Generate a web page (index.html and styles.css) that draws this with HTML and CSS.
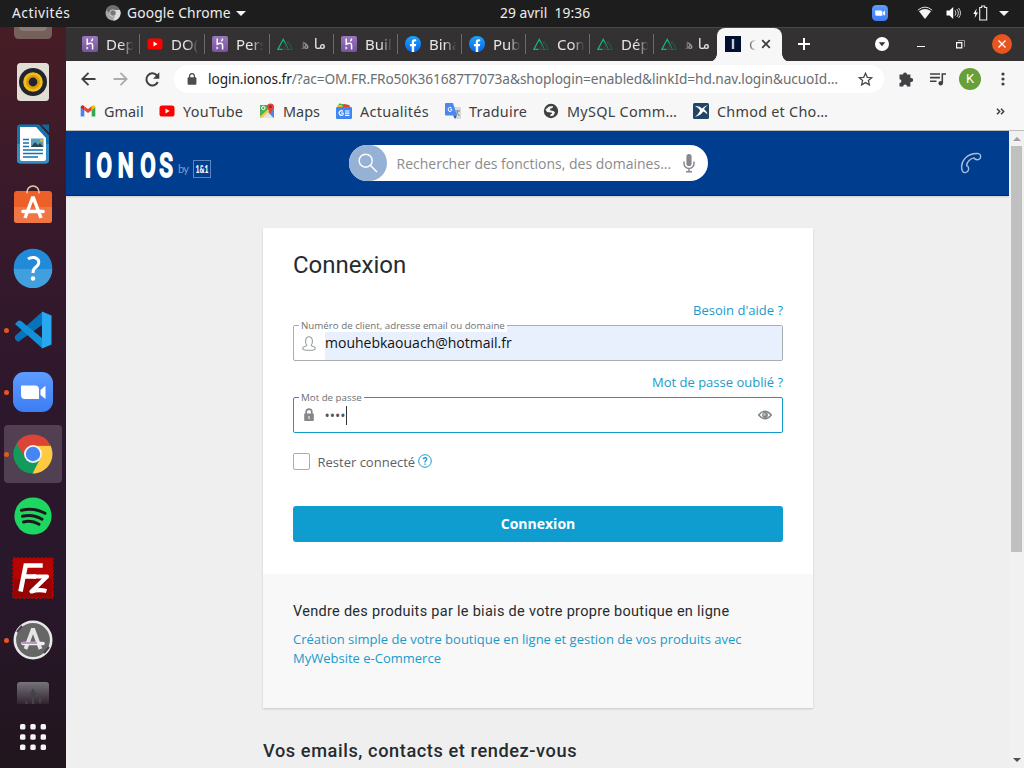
FILE: index.html
```html
<!DOCTYPE html>
<html lang="fr">
<head>
<meta charset="utf-8">
<title>Connexion</title>
<link rel="stylesheet" href="styles.css">
</head>
<body>
<svg class="defs" width="0" height="0">
  <defs>
    <linearGradient id="violet" x2="0" y2="1"><stop stop-color="#9a78bd"/><stop offset="1" stop-color="#76539c"/></linearGradient>
    <linearGradient id="fbg" x2="0" y2="1"><stop stop-color="#19a7fa"/><stop offset="1" stop-color="#0866ed"/></linearGradient>
    <linearGradient id="zoomg" x2="0" y2="1"><stop stop-color="#5d9cff"/><stop offset="1" stop-color="#3d7df5"/></linearGradient>
    <linearGradient id="fade" x2="0" y2="1"><stop stop-color="#77747a"/><stop offset="1" stop-color="#77747a" stop-opacity=".15"/></linearGradient>
    <symbol id="heroku" viewBox="0 0 16 16"><rect width="16" height="16" rx="2" fill="url(#violet)"/><path d="M5.200 2.500v5.700c2.600-1.200 5.400-1.500 5.400 1v4.300M10.600 2.500c0 1.300-.5 2-1.300 2.700" fill="none" stroke="#fff" stroke-width="1.500"/><path d="M4.500 10.200v3.600l2-1.800z" fill="#fff"/></symbol>
    <symbol id="yt" viewBox="0 0 16 16"><rect x=".5" y="2.500" width="15" height="11" rx="2.600" fill="#f00"/><path d="M6.500 5.600v4.800L10.600 8z" fill="#fff"/></symbol>
    <symbol id="nuxt" viewBox="0 0 16 16"><path d="M5.500 13.400H.9L6.200 3.200 8.500 7.500" fill="none" stroke="#10b981" stroke-width="1.200"/><path d="M7.200 13.400H15.400L11.100 5.500 6.800 13.400" fill="none" stroke="#2c5560" stroke-width="1"/><path d="m8.200 6.900 3.300 6.500" stroke="#24806f" stroke-width="1"/></symbol>
    <symbol id="fb" viewBox="0 0 16 16"><circle cx="8" cy="8" r="8" fill="url(#fbg)"/><path d="M6.800 16v-5.800H4.900V7.900h1.900V6.300c0-2 1-3 2.800-3l1.600.1v1.900h-.9c-1 0-1.200.5-1.200 1.200v1.400h2.100l-.4 2.300H9.200V16z" fill="#fff"/></symbol>
    <symbol id="cam" viewBox="0 0 40 40"><rect width="40" height="40" rx="11" fill="url(#zoomg)"/><path d="M8 13.500h14a4 4 0 0 1 4 4V27H12a4 4 0 0 1-4-4zM27.500 18l5-4.200V27l-5-4z" fill="#fff"/></symbol>
  </defs>
</svg>

<header class="topbar">
  <span class="activities">Activités</span>
  <span class="app">
    <svg width="16" height="16" viewBox="0 0 16 16"><circle cx="8" cy="8" r="7.500" fill="#a6a6a6"/><path d="M1 4.500A7.500 7.500 0 0 1 14.800 5H8L5 9z" fill="#6f6f6f"/><path d="M8 5h7a7.500 7.500 0 0 1-7 10.500l3-6z" fill="#ddd"/><circle cx="8" cy="8" r="3.600" fill="#d8d8d8"/><circle cx="8" cy="8" r="2.700" fill="#777"/></svg>
    <span class="appname">Google Chrome</span>
    <i class="caret"></i>
  </span>
  <span class="date">29 avril&nbsp; 19:36</span>
  <span class="tray">
    <svg class="t-cam" width="16" height="16"><use href="#cam"/></svg>
    <svg class="t-wifi" width="16" height="14" viewBox="0 0 16 14"><path d="M.8 4.200Q8-2 15.200 4.200" fill="none" stroke="#ddd" stroke-width="1"/><path d="M2 5.300Q8 .8 14 5.300L8 13z" fill="#f2f2f2"/></svg>
    <svg class="t-vol" width="15" height="14" viewBox="0 0 15 14"><path d="M.5 4.500h3L7.200 1v12L3.500 9.500h-3z" fill="#fff"/><path d="M9 4.300q2 2.700 0 5.400M10.800 3q3.200 4 0 8M12.600 2q3.800 5 0 10" fill="none" stroke="#ccc" stroke-width="1"/></svg>
    <svg class="t-bat" width="15" height="16" viewBox="0 0 15 16"><path d="M3.600 3.500.3 9h2l-.6 4L5 7.500H3z" fill="#fff"/><path d="M6.700 2.500h2V1h3v1.500h2V15h-7z" fill="none" stroke="#eee" stroke-width="1.100"/></svg>
    <i class="caret"></i>
  </span>
</header>

<div class="desktop">
  <nav class="dock">
    <div class="slot cut-top"><svg width="40" height="14" viewBox="0 0 40 14"><path d="M1 0h38v7q0 5-5 5H6q-5 0-5-5z" fill="#75605c"/><path d="M6 0h28q0 4-5 4H11Q6 4 6 0z" fill="#8d7975"/></svg></div>
    <div class="slot"><svg width="34" height="40" viewBox="0 0 34 40"><rect x="1" y="1" width="32" height="38" rx="3.500" fill="#e2ded3"/><circle cx="17" cy="20" r="14" fill="#22252d"/><circle cx="17" cy="20" r="9.800" fill="#f4bd16"/><circle cx="17" cy="20" r="7" fill="#d99d0c"/><circle cx="17" cy="20" r="4.400" fill="#22252d"/></svg></div>
    <div class="slot"><svg width="34" height="40" viewBox="0 0 34 40"><path d="M4 .5h19l10 11V36q0 3.500-3.500 3.500h-25Q1 39.500 1 36V4Q1 .5 4 .5z" fill="#1673ae"/><path d="M1 20h32v16q0 3.500-3.500 3.500h-25Q1 39.500 1 36z" fill="#338fc3"/><path d="M25 .5h8v8z" fill="#11679e"/><path d="M4 3h16l10 11v21q0 2-2 2H6q-2 0-2-2z" fill="#fff"/><path d="M7 15.500h6M7 19h6M7 22.500h6M7 26h20M7 29.500h20M7 33h15" stroke="#1673ae" stroke-width="1.400"/><rect x="15" y="14.500" width="12.500" height="8.500" fill="#5b9dbc"/><path d="m15 23 4-5 3 3 2-2 3.500 4z" fill="#2c4650"/><circle cx="25.500" cy="16.500" r="1.300" fill="#eec20d"/></svg></div>
    <div class="slot store"><svg width="40" height="40" viewBox="0 0 40 40"><rect x="1" y="7" width="38" height="32" rx="3" fill="#ed6029"/><path d="M1 23h38v13q0 3-3 3H4q-3 0-3-3z" fill="#ef7745"/><path d="M14 9.500V8a6 6 0 0 1 12 0v1.500" fill="none" stroke="#edc999" stroke-width="1.600"/><path d="m12 34 7.500-20h1L28 34" fill="none" stroke="#fff" stroke-width="3.400"/><path d="M10 27.500h20" stroke="#fff" stroke-width="3.600" stroke-linecap="round"/></svg></div>
    <div class="slot"><svg width="40" height="40" viewBox="0 0 40 40"><circle cx="20" cy="20" r="19.300" fill="#228bd9"/><path d="M.7 21h38.600a19.300 19.300 0 0 1-38.600 0z" fill="#429fde"/><path d="M15 11q3-2 6-1.500c7 1.500 5 7.500 2 9.500q-3 2-3 6" fill="none" stroke="#fff" stroke-width="3"/><circle cx="20" cy="30.500" r="2.200" fill="#fff"/></svg></div>
    <div class="slot on"><svg width="40" height="40" viewBox="0 0 40 40"><path d="m2 26 27-24 3 1v10L5 32l-3-3z" fill="#0873b9"/><path d="m2 14 3-3q1.500-1 3 0l21 17v10z" fill="#1490d8"/><path d="m29 1.500 9.500 4v29L29 38.500z" fill="#27a8ef"/></svg></div>
    <div class="slot on"><svg width="40" height="40"><use href="#cam"/></svg></div>
    <div class="slot on active"><svg width="40" height="40" viewBox="0 0 40 40"><path d="M20 20V11.500h17.500A19.500 19.500 0 0 1 19.500 39.500z" fill="#fdca41"/><path d="M3.600 9.500A19.500 19.500 0 0 0 19.500 39.500L27.500 24 20 20z" fill="#149b5b"/><path d="M3.600 9.500 12.300 24 20 20v-8.500h17.500A19.500 19.500 0 0 0 3.600 9.500z" fill="#dc4437"/><circle cx="20" cy="20" r="9" fill="#f3f3f3"/><circle cx="20" cy="20" r="7.200" fill="#4486f4"/></svg></div>
    <div class="slot"><svg width="40" height="40" viewBox="0 0 40 40"><circle cx="20" cy="20" r="18.600" fill="#1ed760"/><path d="M8.500 14.300q12.500-3.200 23.500 3M9.500 20.300q10.500-2.600 19.500 2.900M10.500 26q8.500-2 15.500 2.300" fill="none" stroke="#1a1a1d" stroke-width="3" stroke-linecap="round"/></svg></div>
    <div class="slot"><svg width="42" height="42" viewBox="0 0 42 42"><rect x="1" y="1" width="40" height="40" fill="#b40404" stroke="#a00" stroke-width="2" stroke-dasharray="2 2"/><path d="M2 22h38v18H2z" fill="#960303"/><path d="M8.500 34.500 13.700 8.500h17M11.500 19.500H24" fill="none" stroke="#fff" stroke-width="4.600"/><path d="M21 19.500h14L19.500 34.500q7-2.500 15-.5" fill="none" stroke="#fff" stroke-width="4.200" stroke-linejoin="round"/></svg></div>
    <div class="slot on"><svg width="40" height="40" viewBox="0 0 40 40"><circle cx="20" cy="20" r="18.200" fill="#666" stroke="#e8e8e8" stroke-width="2.600"/><path d="m4 12 5-6M31 33l5-6" stroke="#4a424b" stroke-width="2"/><path d="m12.500 29 7-19h1l7 19" fill="none" stroke="#e5e5e5" stroke-width="3.800"/><path d="M10 23.500h20" stroke="#eee" stroke-width="3.600" stroke-linecap="round"/><path d="M9 23h15" stroke="#a05eab" stroke-width="1.200"/></svg></div>
    <div class="slot cut-bottom"><svg width="34" height="23" viewBox="0 0 34 23"><path d="M1 23V4q0-3 3-3h26q3 0 3 3v19z" fill="url(#fade)"/><path d="M17 11v12M10.500 23v-3M24 22v-6" fill="none" stroke="#454248" stroke-width="2.400"/><path d="m17 7.500 3.500 6h-7z" fill="#454248"/></svg></div>
    <div class="slot"><svg width="28" height="28" viewBox="0 0 28 28" fill="#f4f4f4"><rect x="1" y="1" width="5.400" height="5.400" rx="1.500"/><rect x="11.300" y="1" width="5.400" height="5.400" rx="1.500"/><rect x="21.600" y="1" width="5.400" height="5.400" rx="1.500"/><rect x="1" y="11.300" width="5.400" height="5.400" rx="1.500"/><rect x="11.300" y="11.300" width="5.400" height="5.400" rx="1.500"/><rect x="21.600" y="11.300" width="5.400" height="5.400" rx="1.500"/><rect x="1" y="21.600" width="5.400" height="5.400" rx="1.500"/><rect x="11.300" y="21.600" width="5.400" height="5.400" rx="1.500"/><rect x="21.600" y="21.600" width="5.400" height="5.400" rx="1.500"/></svg></div>
  </nav>

  <main class="browser">
    <div class="tabstrip">
      <div class="tab w65"><svg><use href="#heroku"/></svg><span>Dep</span></div>
      <div class="tab w65"><svg><use href="#yt"/></svg><span>DO(</span></div>
      <div class="tab w65"><svg><use href="#heroku"/></svg><span>Pers</span></div>
      <div class="tab"><svg><use href="#nuxt"/></svg><span class="ar" dir="rtl">ما ه&zwj;</span></div>
      <div class="tab"><svg><use href="#heroku"/></svg><span>Buil</span></div>
      <div class="tab"><svg><use href="#fb"/></svg><span>Bina</span></div>
      <div class="tab"><svg><use href="#fb"/></svg><span>Pub</span></div>
      <div class="tab"><svg><use href="#nuxt"/></svg><span>Con</span></div>
      <div class="tab"><svg><use href="#nuxt"/></svg><span>Dép</span></div>
      <div class="tab last"><svg><use href="#nuxt"/></svg><span class="ar" dir="rtl">ما ه&zwj;</span></div>
      <div class="tab current"><svg viewBox="0 0 16 16"><path d="M0 0h16v16H0z" fill="#020f2e"/><path d="M8 3v10" stroke="#c7cbd5" stroke-width="2.400"/></svg><span>C</span><svg class="x" viewBox="0 0 10 10"><path d="m1.200 1.200 7.600 7.600m0-7.600-7.600 7.600" stroke="#3c3c3c" stroke-width="1.700"/></svg></div>
      <svg class="plus" width="12" height="12" viewBox="0 0 12 12"><path d="M6 0v12M0 6h12" stroke="#fff" stroke-width="2"/></svg>
      <div class="winbtns">
        <svg width="14" height="14" viewBox="0 0 14 14"><circle cx="7" cy="7" r="7" fill="#fff"/><path d="M3.800 5.200h6.400L7 9.300z" fill="#333"/></svg>
        <svg class="min" width="8" height="10" viewBox="0 0 8 10"><path d="M0 7.500h8" stroke="#fff"/></svg>
        <svg class="max" width="9" height="9" viewBox="0 0 9 9"><path d="M2 .5h6.500V7" fill="none" stroke="#999"/><path d="M.6 2.600h5.200v5.200H.6z" fill="none" stroke="#fff" stroke-width="1.200"/></svg>
        <svg class="close" width="20" height="20" viewBox="0 0 20 20"><circle cx="10" cy="10" r="10" fill="#e95420"/><path d="m6.500 6.500 7 7m0-7-7 7" stroke="#fff" stroke-width="1.300"/></svg>
      </div>
    </div>

    <div class="toolbar">
      <svg class="back" width="15" height="14" viewBox="0 0 15 14"><path d="M14.500 7h-13M7.500.8 1.300 7l6.200 6.200" fill="none" stroke="#3d4043" stroke-width="1.800"/></svg>
      <svg class="fwd" width="15" height="14" viewBox="0 0 15 14"><path d="M.5 7h13M7.500.8 13.700 7l-6.200 6.200" fill="none" stroke="#a9abad" stroke-width="1.800"/></svg>
      <svg class="reload" width="15" height="15" viewBox="0 0 15 15"><path d="M12.800 10A6 6 0 1 1 12 3.500" fill="none" stroke="#3d4043" stroke-width="2"/><path d="M14.300.3v6.400H8z" fill="#3d4043"/></svg>
      <div class="omnibox">
        <svg class="lock" width="10" height="12" viewBox="0 0 10 12"><rect x=".6" y="4.200" width="8.800" height="7.600" rx="1" fill="#4a4d51"/><path d="M2.600 5V3a2.400 2.400 0 0 1 4.800 0v2" fill="none" stroke="#4a4d51" stroke-width="1.300"/></svg>
        <span class="url"><b>login.ionos.fr</b>/?ac=OM.FR.FRo50K361687T7073a&amp;shoplogin=enabled&amp;linkId=hd.nav.login&amp;ucuoId…</span>
        <svg class="star" width="15" height="14" viewBox="0 0 15 14"><path d="m7.500 1.300 1.800 4 4.400.4-3.300 2.900 1 4.300-3.900-2.300-3.900 2.300 1-4.300L1.300 5.700l4.400-.4z" fill="none" stroke="#47494c" stroke-width="1.300"/></svg>
      </div>
      <svg class="ext" width="16" height="15" viewBox="0 0 16 15"><path d="M5 2.600a2 2 0 0 1 4 0h3.400V6H13.200a2 2 0 0 1 0 4h-.8v4.500H9a1.900 1.900 0 0 0-3.800 0H1.500V11a1.900 1.900 0 0 0 0-3.800V2.600z" fill="#3f4144"/></svg>
      <svg class="queue" width="16" height="13" viewBox="0 0 16 13"><path d="M0 1h10M0 4.600h10M0 8.200h6.500M12.300 10V1H16" fill="none" stroke="#3f4144" stroke-width="1.600"/><circle cx="10.700" cy="10.200" r="2.200" fill="#3f4144"/></svg>
      <span class="avatar">K</span>
      <svg class="dots" width="4" height="14" viewBox="0 0 4 14" fill="#3f4144"><circle cx="2" cy="2" r="1.600"/><circle cx="2" cy="7" r="1.600"/><circle cx="2" cy="12" r="1.600"/></svg>
    </div>

    <div class="bookmarks">
      <a class="b1"><svg viewBox="0 0 16 16"><path d="M.7 13.600V4l3.600 2.700v6.900z" fill="#4285f4"/><path d="M15.300 13.600V4l-3.600 2.700v6.900z" fill="#34a853"/><path d="M15.300 4q-1-3-3.600-.7v3.900l3.600-2.600z" fill="#fbbc04"/><path d="M4.300 3.300 8 6.100l3.700-2.800v3.900L8 10 4.300 7.200z" fill="#ea4335"/><path d="M.7 4q1-3 3.600-.7v3.900L.7 4.600z" fill="#c5221f"/></svg><span>Gmail</span></a>
      <a class="b2"><svg viewBox="0 0 16 16"><use href="#yt"/></svg><span>YouTube</span></a>
      <a class="b3"><svg viewBox="0 0 16 16"><path d="M1 2h14v13H1z" fill="#4caf58"/><path d="M1 15 8 8l7 7z" fill="#e4e4e4"/><path d="m10 10 5 5V6z" fill="#4a84ee"/><path d="m1 13.500 12-11 2 1L3 15H1z" fill="#f5c945"/><path d="M11.500 11C11 8 8.200 6.500 8.200 3.800a3.300 3.300 0 0 1 6.600 0c0 2.700-2.800 4.200-3.300 7.200z" fill="#e44236"/><circle cx="11.500" cy="3.700" r="1.200" fill="#8e2018"/><circle cx="4.300" cy="5" r="1.700" fill="none" stroke="#fff"/></svg><span>Maps</span></a>
      <a class="b4"><svg viewBox="0 0 16 16"><path d="m2 4 1-3.500L13 2v4z" fill="#34a853"/><path d="m8 1 6 1.500L13 6H6z" fill="#ea4335"/><path d="m1 2.500 5-1L7 6H2z" fill="#fbbc04"/><rect y="4" width="16" height="12" rx="1.200" fill="#4285f4"/><path d="M7 8.200Q4 6.400 3 10q1 3.500 4 1.700V10H5M9 8h4.500M9 10.200h4.500M9 12.400h4.500" fill="none" stroke="#fff" stroke-width="1.200"/></svg><span>Actualités</span></a>
      <a class="b5"><svg viewBox="0 0 16 16"><path d="M6 4h9q1 0 1 1v10q0 1-1 1h-5z" fill="#d9d9d9"/><path d="M0 1q0-1 1-1h7l4 12.500H1q-1 0-1-1z" fill="#4a88f0"/><path d="m8 12.500 4 0-2 3.500z" fill="#2a5db8"/><path d="M6.500 4.800Q4 3 3 6q.5 3.500 3 2.300.8-.7.800-2H5" fill="none" stroke="#fff"/><path d="M10.500 8h4.500M12.700 7v1q-.5 3-2 4M11.500 9.500l3 3.500" fill="none" stroke="#71889a"/></svg><span>Traduire</span></a>
      <a class="b6"><svg viewBox="0 0 16 16"><circle cx="8" cy="8" r="7.200" fill="#3e4144"/><path d="M2.500 6.500 6 3.500l4-.5-.5 2-2.500.7.500 1.800 3 .5 1.500 1.500-1.500 3-3 .7-.3-1.400 2-1.200-.7-1.100-3-.2L4 9z" fill="#f7f7f7"/></svg><span>MySQL Comm…</span></a>
      <a class="b7"><svg viewBox="0 0 16 16"><rect width="16" height="16" rx="1.500" fill="#204566"/><path d="M2 3q5-.5 7 2.500Q12 2.500 15 2q-3 2-4 4 3 2.500 3.500 5.500-2.500-2.700-4.500-3-1 3-8 5.500 4-3.500 5.200-6.500Q6 5 2 3z" fill="#fff"/></svg><span>Chmod et Cho…</span></a>
      <svg class="more" width="9" height="7" viewBox="0 0 9 7"><path d="m1 .7 2.700 2.800L1 6.300M5 .7l2.700 2.800L5 6.300" fill="none" stroke="#3c3f42" stroke-width="1.500"/></svg>
    </div>

    <div class="viewport">
      <div class="page">
        <div class="ionos">
          <svg class="logo" width="128" height="34" viewBox="0 0 128 34">
            <text class="brand" transform="scale(.66 1)" x="-.4 17.600 49.500 83.600 112.500" y="29">IONOS</text>
            <text x="93" y="24.500" font-family="Lato" font-size="11" fill="#7c9cc8" textLength="11">by</text>
            <rect x="108.500" y="12.500" width="17" height="17" fill="none" stroke="#5c84bd"/>
            <text x="110.500" y="25" font-family="Lato" font-weight="900" font-size="10.500" fill="#fff" textLength="13" lengthAdjust="spacingAndGlyphs">1&amp;1</text>
          </svg>
          <div class="search">
            <span class="lens"><svg width="20" height="20" viewBox="0 0 20 20"><circle cx="7.700" cy="7.700" r="6.500" fill="none" stroke="#fff" stroke-width="1.400"/><path d="m12.500 12.500 6.500 6.500" stroke="#fff" stroke-width="1.500"/></svg></span>
            <span class="ph">Rechercher des fonctions, des domaines...</span>
            <svg width="12" height="19" viewBox="0 0 12 19"><rect x="3.400" y="0" width="5.200" height="12" rx="2.600" fill="#85888c"/><path d="M1 7.500v2a5 5 0 0 0 10 0v-2M6 14.500v3M3 17.700h6" fill="none" stroke="#85888c" stroke-width="1.500"/></svg>
          </div>
          <svg class="phone" width="22" height="22" viewBox="0 0 22 22"><path d="M2.200 18.500C-.5 9.500 7 .8 18.600 1.600c3 .8 2.600 5.200-.2 6-2 .3-3.500.2-4.400-1.700-3.500.5-7.200 4-7.400 7.800 2 .7 2.200 2.400 1.900 4-.9 3.400-5.100 4-6.300.8z" fill="none" stroke="#a9bfdd" stroke-width="1.400"/></svg>
        </div>

        <div class="content">
          <section class="card">
            <div class="login">
              <h1>Connexion</h1>
              <a class="help">Besoin d'aide ?</a>
              <div class="field user">
                <label>Numéro de client, adresse email ou domaine</label>
                <svg width="14" height="15" viewBox="0 0 14 15"><path d="M4.900 9.500C2.700 7 3 .8 7 .8s4.300 6.200 2.100 8.700c.2 1 4.200.6 4.200 2.700S10.500 14.200 7 14.200.7 14.300.7 12.200s4-1.700 4.200-2.700z" fill="none" stroke="#999da0" stroke-width="1.100"/></svg>
                <span class="value">mouhebkaouach@hotmail.fr</span>
              </div>
              <a class="help">Mot de passe oublié ?</a>
              <div class="field pass">
                <label>Mot de passe</label>
                <svg width="14" height="14" viewBox="0 0 14 14"><rect x="2.200" y="5.500" width="9.600" height="7.500" rx=".8" fill="#85888b"/><path d="M4.200 6V4a2.800 2.800 0 0 1 5.600 0v2" fill="none" stroke="#85888b" stroke-width="1.700"/><path d="M7 8v3" stroke="#eee" stroke-width="1.200"/></svg>
                <span class="value">••••</span><i class="cursor"></i>
                <svg class="eye" width="14" height="10" viewBox="0 0 14 10"><path d="M.7 5Q7-2.600 13.300 5 7 12.600.7 5z" fill="#fff" stroke="#7f8489" stroke-width="1.500"/><circle cx="7" cy="5" r="2.900" fill="#7f8489"/><circle cx="6.500" cy="4.500" r="1.200" fill="#bcc"/></svg>
              </div>
              <div class="stay">
                <i class="box"></i><span>Rester connecté</span>
                <svg width="14" height="14" viewBox="0 0 14 14"><circle cx="7" cy="7" r="6.300" fill="none" stroke="#199ccb"/><path d="M5.200 5.100Q5.600 3.600 7.200 3.700 9 3.900 8.700 5.400 8.500 6.200 7.600 6.700 7 7.200 7 8.400M7 9.400v1.300" fill="none" stroke="#199ccb" stroke-width="1.400"/></svg>
              </div>
              <div class="submit">Connexion</div>
            </div>
            <div class="promo">
              <h2>Vendre des produits par le biais de votre propre boutique en ligne</h2>
              <a>Création simple de votre boutique en ligne et gestion de vos produits avec MyWebsite e-Commerce</a>
            </div>
          </section>
          <h3>Vos emails, contacts et rendez-vous</h3>
        </div>
      </div>
      <div class="scrollbar"><i class="up"></i><i class="thumb"></i><i class="down"></i></div>
    </div>
  </main>
</div>
</body>
</html>
```
FILE: styles.css
```css
* { box-sizing: border-box; }
body { margin: 0; width: 1024px; height: 768px; overflow: hidden; font-family: "Noto Sans", "Open Sans", sans-serif; }
svg { flex: none; display: block; }
span { white-space: nowrap; }
.defs { position: absolute; }

.topbar { height: 27px; background: #1d1d1d; color: #eee; display: flex; align-items: center; font-size: 13.800px; line-height: 26px; padding: 0 0 1px 12px; letter-spacing: .15px; }
.activities { width: 93px; letter-spacing: .5px; }
.app { display: flex; align-items: center; width: 395px; }
.appname { margin-left: 6px; width: 109px; }
.caret { border: 5px solid transparent; border-top-color: #f2f2f2; border-bottom: 0; flex: none; }
.date { width: 372px; letter-spacing: .05px; }
.tray { display: flex; align-items: center; }
.t-wifi { margin-left: 29px; }
.t-vol { margin-left: 13px; }
.t-bat { margin: 0 11px 0 12px; }

.desktop { display: flex; height: 741px; }
.dock { width: 66px; flex: none; background: linear-gradient(#471d25, #38192b 25%, #2c172c 55%, #29172b 75%, #21151e); }
.slot { position: relative; height: 62px; display: flex; align-items: center; justify-content: center; }
.cut-top { height: 24px; align-items: flex-start; }
.store { padding-bottom: 5px; }
.cut-bottom { height: 35px; padding-top: 10px; align-items: flex-start; }
.on::before { content: ""; position: absolute; left: 4px; top: 28.500px; width: 5px; height: 5px; border-radius: 50%; background: #e95420; }
.active::after { content: ""; position: absolute; inset: 2px 4px; border-radius: 4px; background: rgba(255,255,255,.18); }
.active svg, .active::before { z-index: 1; }
.active svg { position: relative; }

.browser { width: 958px; display: flex; flex-direction: column; }
.tabstrip { height: 34px; background: #333132; border-top: 1px solid #484647; display: flex; align-items: center; padding: 0 0 1px 10px; }
.tab { width: 64px; height: 20px; padding-left: 7px; display: flex; align-items: center; border-right: 1px solid #6b696a; }
.tab:first-child { width: 64px; padding-left: 6px; }
.w65 { width: 65px; }
.last { border-color: transparent; }
.tab svg { width: 16px; height: 16px; }
.tab span { margin-left: 8px; width: 28px; overflow: hidden; font-size: 15px; line-height: 22px; color: #e6e6e6; mask-image: linear-gradient(90deg, #000 55%, transparent 98%); }
.tab span.ar { font-family: "DejaVu Sans", sans-serif; font-size: 14.500px; mask-image: linear-gradient(270deg, #000 55%, transparent 110%); width: 25px; }
.tab.current { position: relative; width: 65px; height: 34px; margin: 0 0 -1px -1px; padding: 0 0 1px 8px; border: 0; border-radius: 8px 8px 0 0; background: #f7f7f7; }
.tab.current span { color: #555; width: 7px; margin-left: 8px; mask-image: linear-gradient(90deg, #000, transparent); }
.current::before, .current::after { content: ""; position: absolute; bottom: 0; width: 8px; height: 8px; }
.current::before { left: -8px; background: radial-gradient(circle at 0 0, transparent 7.500px, #f7f7f7 8px); }
.current::after { right: -8px; background: radial-gradient(circle at 100% 0, transparent 7.500px, #f7f7f7 8px); }
.tab .x { width: 10px; height: 10px; margin-left: 5px; }
.plus { margin-left: 16px; }
.winbtns { display: flex; align-items: center; margin-left: 65px; }
.min { margin-left: 28px; }
.max { margin-left: 31px; }
.close { margin-left: 27px; }

.toolbar { height: 37px; background: #f7f7f7; display: flex; align-items: center; padding: 0 0 1px 15px; }
.fwd { margin-left: 17px; }
.reload { margin-left: 17px; }
.omnibox { width: 710px; height: 28px; margin-left: 14px; padding-left: 13px; background: #fff; border-radius: 14px; display: flex; align-items: center; }
.url { width: 650px; margin-left: 11px; font-size: 13.700px; letter-spacing: -.09px; line-height: 18px; margin-top: -1px; color: #6b6e72; }
.url b { font-weight: 400; color: #1c1c1e; }
.ext { margin-left: 14px; }
.queue { margin-left: 16px; }
.avatar { width: 22px; height: 22px; margin-left: 13px; border-radius: 50%; background: #689f38; color: #fff; font: 13px/22px Roboto, sans-serif; text-align: center; }
.dots { margin-left: 20px; }

.bookmarks { height: 33px; background: #f7f7f7; border-bottom: 1px solid #bdbdbd; display: flex; align-items: center; padding: 0 0 6px 14px; font-size: 14.400px; letter-spacing: .04px; color: #3d4043; }
.bookmarks a { display: flex; align-items: center; gap: 8px; flex: none; }
.bookmarks a svg { width: 16px; height: 16px; }
.b1 { width: 79px; } .b2 { width: 100px; letter-spacing: .3px; } .b3 { width: 77px; } .b4 { width: 109px; letter-spacing: .3px; } .b5 { width: 98px; letter-spacing: .25px; }
.b6 { width: 150px; letter-spacing: .3px; } .b7 { width: 303px; letter-spacing: .25px; }

.viewport { flex: 1; display: flex; min-height: 0; }
.page { width: 943px; background: #efefef; overflow: hidden; font-family: "Open Sans", sans-serif; }
.ionos { height: 65px; background: #003d8f; border-bottom: 1px solid #002a63; box-shadow: 0 1px 2px #ccc; display: flex; align-items: center; }
.logo { margin: 4px 0 0 19px; }
.brand { font: 500 34px Roboto, sans-serif; fill: #fff; stroke: #fff; stroke-width: 2px; stroke-linejoin: round; }
.search { width: 359px; height: 36px; margin: 0 0 0 136px; border-radius: 18px; background: #fff; display: flex; align-items: center; }
.lens { width: 38px; height: 36px; border-radius: 19px; background: #95b1d3; display: flex; align-items: center; justify-content: center; }
.ph { width: 296px; padding-left: 9.500px; font-size: 14px; color: #8b8b8b; }
.phone { margin-left: 252px; }

.content { width: 550px; margin: 32px 0 0 197px; }
.card { height: 480px; background: #fff; box-shadow: 0 1px 2px rgba(0,0,0,.16); }
.login { height: 346px; padding: 22px 30px 0; display: flex; flex-direction: column; }
h1 { margin: 0 0 44px; font: 400 24px/30px Roboto, sans-serif; color: #262b30; }
.help { align-self: flex-end; font-size: 13px; line-height: 28px; height: 29px; margin-top: -23px; color: #1a9ac9; }
.help:first-of-type { margin-top: -28px; }
.field { position: relative; height: 36px; border: 1px solid #a9acb1; border-radius: 2px; display: flex; align-items: center; padding-left: 8px; margin-bottom: 30px; }
.field label { position: absolute; left: 5px; top: -7px; padding: 0 2px; background: #fff; font-size: 9.750px; line-height: 13px; color: #6d7276; white-space: nowrap; }
.value { margin-left: 9px; }
.user .value { flex: 1; height: 34px; font-size: 14px; line-height: 34px; color: #111; background: #e8effd; }
.pass { border-color: #0f9bcb; margin-bottom: 20px; }
.pass .value { font-size: 14px; width: 21px; color: #555; margin-left: 8.500px; }
.cursor { width: 1px; height: 19px; background: #333; }
.eye { margin-left: 411.500px; }
.stay { display: flex; align-items: center; height: 17px; font-size: 13px; color: #5c6166; }
.box { width: 17px; height: 17px; border: 1px solid #a9acb1; border-radius: 2px; margin-right: 7.500px; }
.stay svg { margin-left: 2.500px; margin-top: -2px; }
.submit { height: 36px; margin-top: 36px; border-radius: 3px; background: #0e9dce; color: #fff; font-weight: 700; font-size: 14px; line-height: 36px; text-align: center; }
.promo { height: 134px; background: #f8f8f8; padding: 28px 30px; }
h2 { margin: 0 0 8px; font: 400 14.500px/20px Roboto, sans-serif; letter-spacing: .29px; color: #262b30; white-space: nowrap; }
.promo a { display: block; font-size: 13px; line-height: 19px; color: #1a9ac9; }
h3 { margin: 31px 0 0; font: 500 18.200px/24px Roboto, sans-serif; letter-spacing: .58px; color: #262b30; white-space: nowrap; }

.scrollbar { width: 15px; background: #f1f1f1; display: flex; flex-direction: column; align-items: center; }
.up { border: 4px solid transparent; border-bottom-color: #a0a0a0; border-top: 0; margin-top: 6px; }
.thumb { width: 11px; height: 406px; background: #c0c0c0; margin-top: 5px; }
.down { margin: auto 0 6px; border: 4px solid transparent; border-top-color: #505050; border-bottom: 0; }
```
